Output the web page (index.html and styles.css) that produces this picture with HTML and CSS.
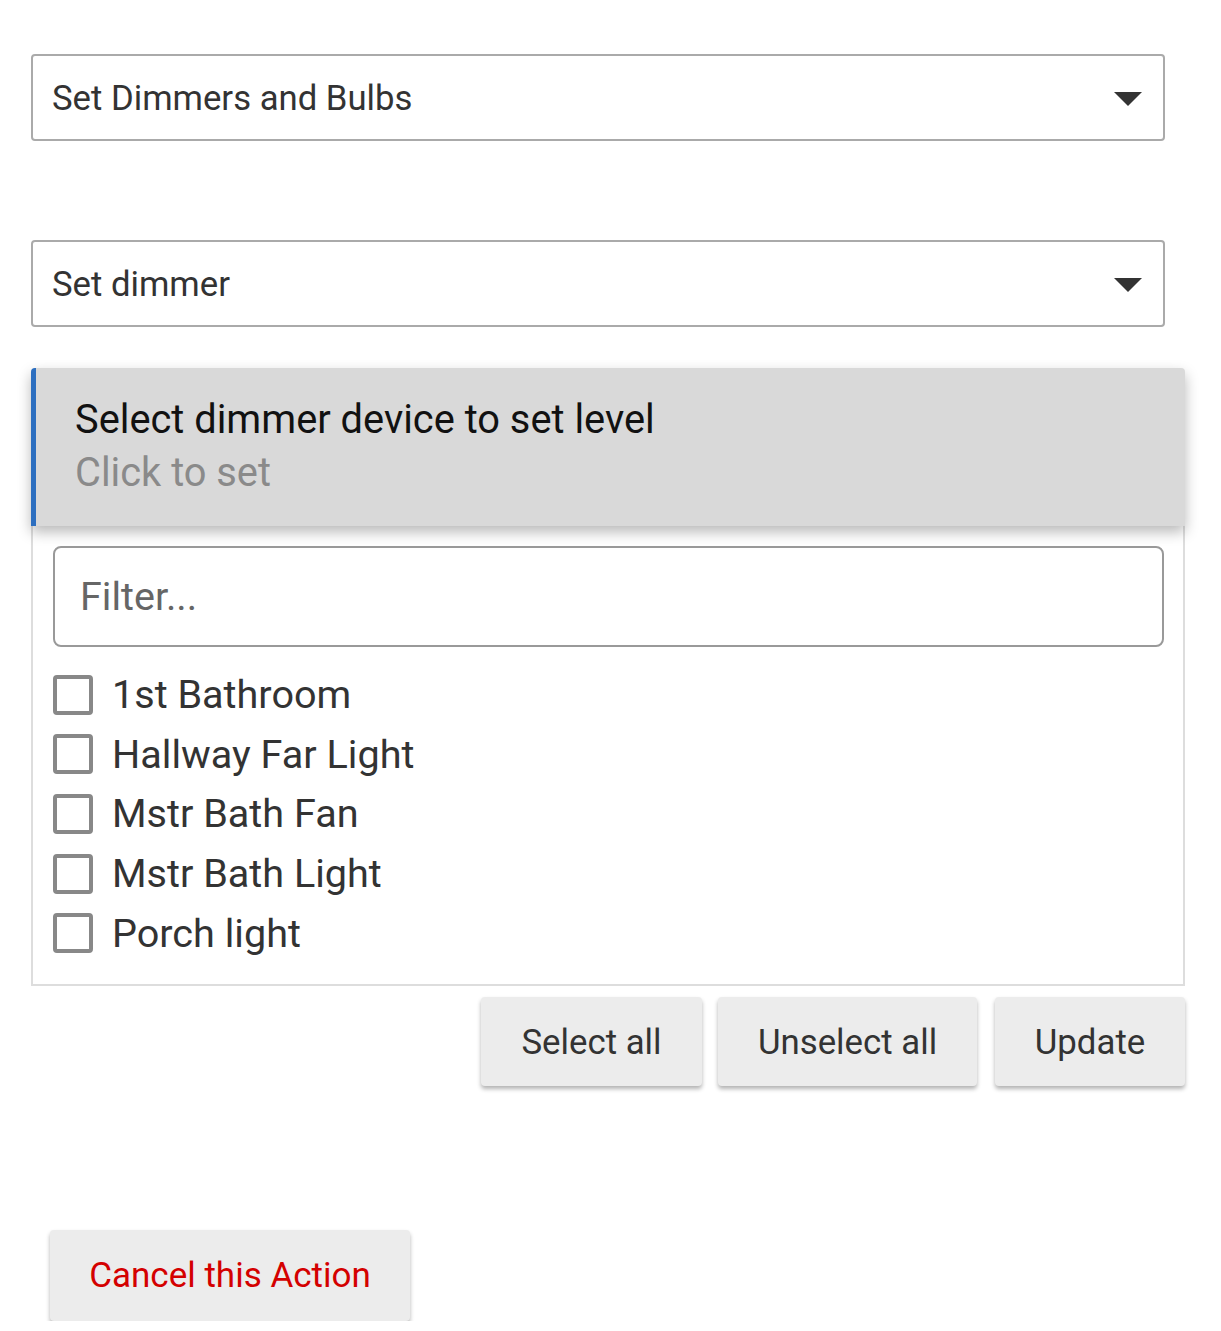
FILE: index.html
```html
<!DOCTYPE html>
<html>
<head>
<meta charset="utf-8">
<link rel="stylesheet" href="styles.css">
</head>
<body>
<div class="page">
  <div class="select sel1">
    <span class="select-text">Set Dimmers and Bulbs</span>
    <svg class="caret" width="28" height="14" viewBox="0 0 28 14"><path d="M0 0 H28 L14 14 Z" fill="#333"/></svg>
  </div>
  <div class="select sel2">
    <span class="select-text">Set dimmer</span>
    <svg class="caret" width="28" height="14" viewBox="0 0 28 14"><path d="M0 0 H28 L14 14 Z" fill="#333"/></svg>
  </div>
  <div class="panel">
    <div class="panel-head">
      <div class="head-title">Select dimmer device to set level</div>
      <div class="head-sub">Click to set</div>
    </div>
    <div class="panel-body">
      <div class="filter">Filter...</div>
      <ul class="list">
        <li class="item"><span class="box"></span><span class="label">1st Bathroom</span></li>
        <li class="item"><span class="box"></span><span class="label">Hallway Far Light</span></li>
        <li class="item"><span class="box"></span><span class="label">Mstr Bath Fan</span></li>
        <li class="item"><span class="box"></span><span class="label">Mstr Bath Light</span></li>
        <li class="item"><span class="box"></span><span class="label">Porch light</span></li>
      </ul>
    </div>
    <div class="actions">
      <button class="btn btn-select">Select all</button>
      <button class="btn btn-unselect">Unselect all</button>
      <button class="btn btn-update">Update</button>
    </div>
  </div>
  <div class="cancel-wrap">
    <button class="btn btn-cancel">Cancel this Action</button>
  </div>
</div>
</body>
</html>
```
FILE: styles.css
```css
* { box-sizing: border-box; }
html, body { margin: 0; padding: 0; background: #fff; }
body { font-family: Roboto, "Liberation Sans", sans-serif; color: #333; }
.page { padding: 54px 0 0 31px; width: 1221px; }
.select {
  width: 1134px; height: 87px;
  border: 2px solid #aaa; border-radius: 4px;
  display: flex; align-items: center; justify-content: space-between;
  padding: 0 21px 0 19px;
}
.sel2 { margin-top: 99px; }
.select-text { font-size: 34.7px; color: #333; }
.caret { margin-top: 2px; }
.panel { margin-top: 41px; width: 1154px; }
.panel-head {
  position: relative;
  background: #d9d9d9;
  border-left: 5px solid #2d6fc0;
  border-radius: 4px 4px 0 0;
  height: 158px;
  padding: 25px 0 0 39px;
  box-shadow: 0 6px 14px rgba(0,0,0,0.28);
  z-index: 1;
}
.head-title { font-size: 39.8px; color: #111; line-height: 53px; }
.head-sub { font-size: 39.8px; color: #8a8a8a; line-height: 53px; }
.panel-body {
  border: 2px solid #ddd; border-top: none;
  padding: 20px 20px 20px 20px;
  height: 460px;
}
.filter {
  height: 101px; width: 1111px;
  border: 2px solid #999; border-radius: 8px;
  padding-left: 25px;
  display: flex; align-items: center;
  font-size: 39.5px; color: #666;
}
.list { list-style: none; margin: 18px 0 0 0; padding: 0; }
.item { display: flex; align-items: center; height: 59.6px; }
.box {
  width: 40px; height: 40px;
  border: 4px solid #888; border-radius: 4px;
  flex: none;
}
.label { font-size: 39.6px; color: #333; margin-left: 19px; }
.actions { display: flex; justify-content: flex-end; gap: 16px; margin-top: 11px; }
.btn {
  font-family: Roboto, "Liberation Sans", sans-serif;
  border: none; background: #ececec; border-radius: 4px;
  height: 89px; font-size: 34.8px; color: #333;
  box-shadow: 0 3px 4px rgba(0,0,0,0.3);
}
.btn-select { width: 221px; }
.btn-unselect { width: 259px; margin-left: 0; }
.btn-update { width: 190px; margin-left: 2px; }
.cancel-wrap { padding: 144px 0 0 19px; }
.btn-cancel { width: 360px; height: 91px; color: #d40000; font-size: 35px; }
```
